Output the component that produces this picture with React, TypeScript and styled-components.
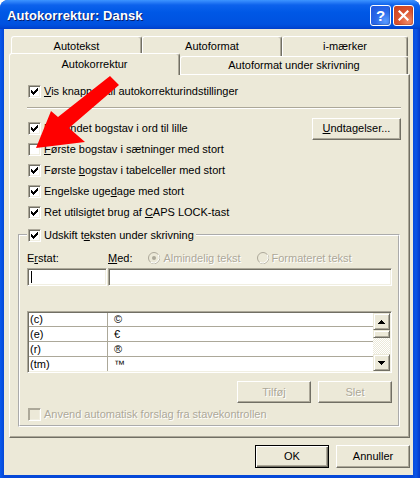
import React from "react";
import styled, { createGlobalStyle } from "styled-components";

const GlobalStyle = createGlobalStyle`
  html, body { margin: 0; padding: 0; background: #ffffff; }
  body {
    font-family: "Liberation Sans", Arial, sans-serif;
    font-size: 11px;
    line-height: 13px;
    color: #000;
  }
  * { box-sizing: border-box; }
`;

const Window = styled.div`
  position: relative;
  width: 420px;
  height: 478px;
  display: flex;
  flex-direction: column;
  background: linear-gradient(90deg, #0A5AEC 0px, #0548D8 4px, #0548D8 412px, #0A55E6 416px, #0238C8 420px);
  border-radius: 8px 8px 0 0;
  overflow: hidden;
`;

const TitleBar = styled.div`
  height: 29px;
  flex: none;
  display: flex;
  align-items: center;
  padding: 1px 6px 0 7px;
  background: linear-gradient(
    180deg,
    #3D95FF 0px,
    #2C80F8 2px,
    #0D62EC 5px,
    #0058E6 12px,
    #0055E3 18px,
    #0052E0 24px,
    #0049D6 27px,
    #003DC9 29px
  );
`;

const TitleText = styled.div`
  flex: 1;
  padding-top: 1px;
  font-family: "Liberation Sans", Arial, sans-serif;
  font-weight: bold;
  font-size: 13px;
  color: #fff;
  text-shadow: 1px 1px 0 #0A1E6A;
  letter-spacing: 0.1px;
`;

const TitleButtons = styled.div`
  display: flex;
  gap: 2px;
`;

const CaptionButton = styled.div<{ $variant: "help" | "close" }>`
  width: 21px;
  height: 21px;
  border: 1px solid #fff;
  border-radius: 3px;
  display: flex;
  align-items: center;
  justify-content: center;
  color: #fff;
  font-family: "Liberation Sans", Arial, sans-serif;
  font-weight: bold;
  font-size: 15px;
  background: ${(p) =>
    p.$variant === "help"
      ? "radial-gradient(circle at 75% 80%, #5A9BFF 0%, #2A6AEA 45%, #1F55DB 100%)"
      : "radial-gradient(circle at 75% 80%, #F08A66 0%, #DB5531 45%, #C8401E 100%)"};
  box-shadow: inset -1px -1px 0 rgba(0, 0, 0, 0.15);
`;

const Body = styled.div`
  flex: 1;
  margin: 0 7px 3px 4px;
  background: #ECE9D8;
  display: flex;
  flex-direction: column;
  padding: 7px 3px 7px 5px;
`;

const BackRow = styled.div`
  display: flex;
  height: 20px;
  padding-left: 2px;
`;

const FrontRow = styled.div`
  display: flex;
  align-items: flex-end;
  height: 18px;
`;

const Tab = styled.div<{ $w: number; $selected?: boolean }>`
  width: ${(p) => p.$w}px;
  height: ${(p) => (p.$selected ? "22px" : "100%")};
  margin-bottom: ${(p) => (p.$selected ? "-1px" : "0")};
  position: ${(p) => (p.$selected ? "relative" : "static")};
  z-index: ${(p) => (p.$selected ? 2 : "auto")};
  padding-bottom: ${(p) => (p.$selected ? "1px" : "0")};
  background: #ECE9D8;
  border-top: 1px solid #fff;
  border-left: 1px solid #fff;
  border-right: 1px solid #716F64;
  border-radius: 3px 3px 0 0;
  box-shadow: inset -1px 0 0 #ACA899;
  display: flex;
  align-items: center;
  justify-content: center;
  white-space: nowrap;
`;

const Panel = styled.div`
  height: 364px;
  border: 1px solid;
  border-color: #fff #716F64 #716F64 #fff;
  box-shadow: inset -1px -1px 0 #ACA899;
  padding: 6px 8px 0 18px;
  display: flex;
  flex-direction: column;
`;

const OptionRow = styled.div<{ $h: number }>`
  height: ${(p) => p.$h}px;
  display: flex;
  align-items: center;
  justify-content: space-between;
`;

const Separator = styled.div`
  height: 2px;
  margin: 6px 0 9px -1px;
  border-top: 1px solid #ACA899;
  border-bottom: 1px solid #fff;
`;

const CheckLabel = styled.label<{ $disabled?: boolean }>`
  display: flex;
  align-items: center;
  gap: 3px;
  height: 14px;
  white-space: nowrap;
  color: ${(p) => (p.$disabled ? "#ACA899" : "#000")};
  text-shadow: ${(p) => (p.$disabled ? "1px 1px 0 #fff" : "none")};
`;

const Box = styled.span<{ $disabled?: boolean }>`
  width: 13px;
  height: 13px;
  flex: none;
  display: flex;
  align-items: center;
  justify-content: center;
  background: ${(p) => (p.$disabled ? "#ECE9D8" : "#fff")};
  border: 1px solid;
  border-color: #ACA899 #fff #fff #ACA899;
  box-shadow: inset 1px 1px 0 ${(p) => (p.$disabled ? "#ACA899" : "#716F64")},
    inset -1px -1px 0 #F1EFE2;
`;

const U = styled.span`
  text-decoration: underline;
  text-underline-offset: 1px;
`;

const Button = styled.div<{ $w: number; $h: number; $default?: boolean; $disabled?: boolean }>`
  width: ${(p) => p.$w}px;
  height: ${(p) => p.$h}px;
  flex: none;
  display: flex;
  align-items: center;
  justify-content: center;
  background: #ECE9D8;
  border: 1px solid;
  border-color: ${(p) => (p.$default ? "#000" : "#fff #716F64 #716F64 #fff")};
  box-shadow: ${(p) =>
    p.$default
      ? "inset 1px 1px 0 #fff, inset -1px -1px 0 #716F64, inset -2px -2px 0 #ACA899"
      : "inset -1px -1px 0 #ACA899"};
  color: ${(p) => (p.$disabled ? "#ACA899" : "#000")};
  text-shadow: ${(p) => (p.$disabled ? "1px 1px 0 #fff" : "none")};
  white-space: nowrap;
`;

const GroupBox = styled.fieldset`
  margin: 5px 1px 0 -10px;
  padding: 0 6px 4px 7px;
  border: 2px groove #fff;
  min-width: 0;
  display: flex;
  flex-direction: column;
`;

const GroupLegend = styled.legend`
  padding: 0 2px 0 1px;
  margin: 0;
`;

const LabelsRow = styled.div`
  margin-top: 8px;
  height: 16px;
  display: flex;
  align-items: center;
`;

const FieldLabel = styled.span<{ $w?: number }>`
  width: ${(p) => (p.$w ? `${p.$w}px` : "auto")};
  flex: none;
  white-space: nowrap;
`;

const RadioItem = styled.span`
  display: flex;
  align-items: center;
  gap: 3px;
  color: #ACA899;
  text-shadow: 1px 1px 0 #fff;
  white-space: nowrap;
  margin-left: 16px;
`;

const InputRow = styled.div`
  margin-top: 2px;
  height: 18px;
  display: flex;
  gap: 1px;
`;

const TextBox = styled.div<{ $w?: number }>`
  ${(p) => (p.$w ? `width: ${p.$w}px; flex: none;` : "flex: 1;")}
  height: 100%;
  background: #fff;
  border: 1px solid;
  border-color: #ACA899 #fff #fff #ACA899;
  box-shadow: inset 1px 1px 0 #716F64, inset -1px -1px 0 #F1EFE2;
  display: flex;
  align-items: center;
  padding-left: 3px;
`;

const Caret = styled.span`
  width: 1px;
  height: 12px;
  background: #000;
`;

const ListBox = styled.div`
  margin-top: 25px;
  height: 62px;
  display: flex;
  background: #fff;
  border: 1px solid;
  border-color: #ACA899 #fff #fff #ACA899;
  box-shadow: inset 1px 1px 0 #716F64, inset -1px -1px 0 #F1EFE2;
  padding: 1px;
`;

const ListTable = styled.div`
  flex: 1;
  display: flex;
  flex-direction: column;
`;

const ListRow = styled.div<{ $h: number; $last?: boolean }>`
  height: ${(p) => p.$h}px;
  display: flex;
  border-bottom: ${(p) => (p.$last ? "none" : "1px solid #ACA899")};
`;

const KeyCell = styled.div`
  width: 79px;
  flex: none;
  border-right: 1px solid #ACA899;
  padding-left: 1px;
  display: flex;
  align-items: center;
`;

const ValueCell = styled.div`
  flex: 1;
  padding-left: 6px;
  display: flex;
  align-items: center;
`;

const ScrollBar = styled.div`
  width: 17px;
  flex: none;
  display: flex;
  flex-direction: column;
`;

const ScrollButton = styled.div<{ $h: number }>`
  height: ${(p) => p.$h}px;
  flex: none;
  background: #ECE9D8;
  border: 1px solid;
  border-color: #ECE9D8 #716F64 #716F64 #ECE9D8;
  box-shadow: inset 1px 1px 0 #fff, inset -1px -1px 0 #ACA899;
  display: flex;
  align-items: center;
  justify-content: center;
`;

const Track = styled.div`
  flex: 1;
  background-color: #ECE9D8;
  background-image: repeating-conic-gradient(#ffffff 0 25%, #ECE9D8 0 50%);
  background-size: 2px 2px;
`;

const ActionRow = styled.div`
  margin-top: 8px;
  height: 22px;
  display: flex;
  justify-content: flex-end;
  gap: 7px;
`;

const DisabledRow = styled.div`
  margin-top: 4px;
  padding-left: 1px;
  height: 14px;
  display: flex;
  align-items: center;
`;

const DialogButtons = styled.div`
  margin-top: 7px;
  display: flex;
  justify-content: flex-end;
  gap: 7px;
`;

const ArrowOverlay = styled.svg`
  position: absolute;
  left: 0;
  top: 0;
  width: 420px;
  height: 478px;
  pointer-events: none;
`;

const CHECK: [number, number][] = [
  [0, 2],
  [1, 3],
  [2, 4],
  [3, 3],
  [4, 2],
  [5, 1],
  [6, 0],
];

function CheckMark() {
  return (
    <svg width="7" height="7" viewBox="0 0 7 7" shapeRendering="crispEdges">
      {CHECK.map(([x, y]) => (
        <rect key={x} x={x} y={y} width="1" height="3" fill="#000" />
      ))}
    </svg>
  );
}

function CheckBox({
  checked,
  disabled,
  children,
}: {
  checked?: boolean;
  disabled?: boolean;
  children: React.ReactNode;
}) {
  return (
    <CheckLabel $disabled={disabled}>
      <Box $disabled={disabled}>{checked ? <CheckMark /> : null}</Box>
      <span>{children}</span>
    </CheckLabel>
  );
}

function RadioDot({ selected }: { selected?: boolean }) {
  return (
    <svg width="12" height="12" viewBox="0 0 12 12">
      <circle cx="6" cy="6" r="5.5" fill="#ECE9D8" stroke="#ACA899" />
      <path d="M10.2 2.6 A5.5 5.5 0 0 1 2.6 10.2" fill="none" stroke="#fff" />
      {selected ? <circle cx="6" cy="6" r="2" fill="#ACA899" /> : null}
    </svg>
  );
}

function Triangle({ up }: { up?: boolean }) {
  return (
    <svg width="7" height="4" viewBox="0 0 7 4" shapeRendering="crispEdges">
      <path d={up ? "M3.5 0 L7 4 L0 4 Z" : "M0 0 L7 0 L3.5 4 Z"} fill="#000" />
    </svg>
  );
}

const entries: [string, string][] = [
  ["(c)", "©"],
  ["(e)", "€"],
  ["(r)", "®"],
  ["(tm)", "™"],
];
const rowHeights = [14, 15, 15, 14];

export default function App() {
  return (
    <>
      <GlobalStyle />
      <Window>
        <TitleBar>
          <TitleText>Autokorrektur: Dansk</TitleText>
          <TitleButtons>
            <CaptionButton $variant="help">?</CaptionButton>
            <CaptionButton $variant="close">
              <svg width="11" height="11" viewBox="0 0 11 11">
                <path d="M1.5 1.5 L9.5 9.5 M9.5 1.5 L1.5 9.5" stroke="#fff" strokeWidth="2.2" strokeLinecap="square" />
              </svg>
            </CaptionButton>
          </TitleButtons>
        </TitleBar>
        <Body>
          <BackRow>
            <Tab $w={131}>Autotekst</Tab>
            <Tab $w={140}>Autoformat</Tab>
            <Tab $w={126}>i-mærker</Tab>
          </BackRow>
          <FrontRow>
            <Tab $w={171} $selected>
              Autokorrektur
            </Tab>
            <Tab $w={228}>Autoformat under skrivning</Tab>
          </FrontRow>
          <Panel>
            <OptionRow $h={20}>
              <CheckBox checked>
                <U>V</U>is knappen til autokorrekturindstillinger
              </CheckBox>
            </OptionRow>
            <Separator />
            <OptionRow $h={21}>
              <CheckBox checked>
                Ret <U>a</U>ndet bogstav i ord til lille
              </CheckBox>
              <Button $w={89} $h={22}>
                <span>
                  <U>U</U>ndtagelser...
                </span>
              </Button>
            </OptionRow>
            <OptionRow $h={21}>
              <CheckBox>
                <U>F</U>ørste bogstav i sætninger med stort
              </CheckBox>
            </OptionRow>
            <OptionRow $h={21}>
              <CheckBox checked>
                Første <U>b</U>ogstav i tabelceller med stort
              </CheckBox>
            </OptionRow>
            <OptionRow $h={21}>
              <CheckBox checked>
                Engelske uge<U>d</U>age med stort
              </CheckBox>
            </OptionRow>
            <OptionRow $h={21}>
              <CheckBox checked>
                Ret utilsigtet brug af <U>C</U>APS LOCK-tast
              </CheckBox>
            </OptionRow>
            <GroupBox>
              <GroupLegend>
                <CheckBox checked>
                  Udskift t<U>e</U>ksten under skrivning
                </CheckBox>
              </GroupLegend>
              <LabelsRow>
                <FieldLabel $w={81}>
                  E<U>r</U>stat:
                </FieldLabel>
                <FieldLabel>
                  <U>M</U>ed:
                </FieldLabel>
                <RadioItem>
                  <RadioDot selected />
                  Almindelig tekst
                </RadioItem>
                <RadioItem>
                  <RadioDot />
                  Formateret tekst
                </RadioItem>
              </LabelsRow>
              <InputRow>
                <TextBox $w={80}>
                  <Caret />
                </TextBox>
                <TextBox />
              </InputRow>
              <ListBox>
                <ListTable>
                  {entries.map(([k, v], i) => (
                    <ListRow key={k} $h={rowHeights[i]} $last={i === entries.length - 1}>
                      <KeyCell>{k}</KeyCell>
                      <ValueCell>{v}</ValueCell>
                    </ListRow>
                  ))}
                </ListTable>
                <ScrollBar>
                  <ScrollButton $h={17}>
                    <Triangle up />
                  </ScrollButton>
                  <ScrollButton $h={8} />
                  <Track />
                  <ScrollButton $h={17}>
                    <Triangle />
                  </ScrollButton>
                </ScrollBar>
              </ListBox>
              <ActionRow>
                <Button $w={74} $h={22} $disabled>
                  Tilføj
                </Button>
                <Button $w={74} $h={22} $disabled>
                  Slet
                </Button>
              </ActionRow>
              <DisabledRow>
                <CheckBox disabled>Anvend automatisk forslag fra stavekontrollen</CheckBox>
              </DisabledRow>
            </GroupBox>
          </Panel>
          <DialogButtons>
            <Button $w={74} $h={23} $default>
              OK
            </Button>
            <Button $w={74} $h={23}>
              Annuller
            </Button>
          </DialogButtons>
        </Body>
        <ArrowOverlay viewBox="0 0 420 478">
          <polygon
            points="110,76 119,85 69,128 85,142 36,148 51,111 58,117"
            fill="#FF0000"
          />
        </ArrowOverlay>
      </Window>
    </>
  );
}
